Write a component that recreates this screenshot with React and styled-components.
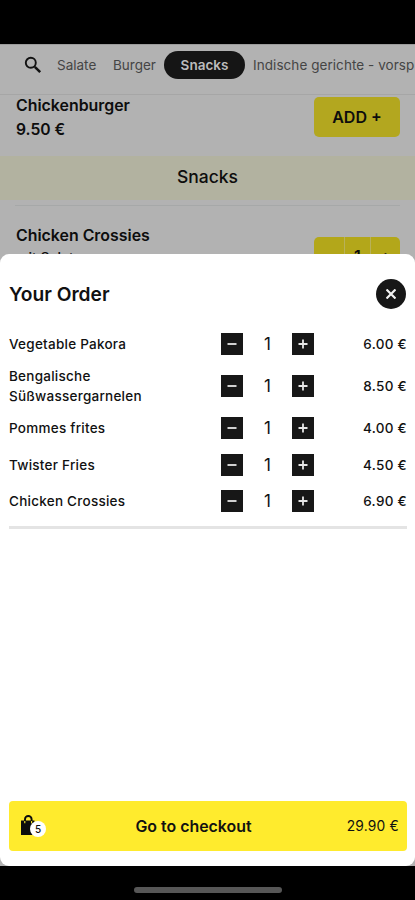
import styled, { createGlobalStyle } from "styled-components";

const GlobalStyle = createGlobalStyle`
  * {
    box-sizing: border-box;
  }
  body {
    margin: 0;
    background: #000;
    font-family: Inter, "Liberation Sans", sans-serif;
    color: #111;
  }
  button {
    font: inherit;
    color: inherit;
    border: 0;
    padding: 0;
  }
`;

const Phone = styled.div`
  position: relative;
  width: 415px;
  height: 900px;
  padding-top: 44px;
  background: #000;
  overflow: hidden;
`;

const Menu = styled.main`
  height: 822px;
  background: #b2b2b2;
  overflow: hidden;
  color: #0d0d0d;
`;

const Categories = styled.nav`
  display: flex;
  align-items: center;
  height: 51px;
  padding: 0 0 9px 24px;
  border-top: 1px solid #9b9b9b;
  border-bottom: 1px solid #a6a6a6;
  white-space: nowrap;
`;

const SearchIcon = styled.svg`
  flex: none;
  width: 18px;
  height: 18px;
  margin-right: 15px;
`;

const Category = styled.span`
  flex: none;
  width: ${({ $width }) => $width}px;
  font-size: 13.5px;
  letter-spacing: ${({ $spacing }) => $spacing || 0}px;
  color: #454545;
`;

const ActiveCategory = styled.span`
  flex: none;
  width: 81px;
  height: 28px;
  margin-right: 8px;
  border-radius: 14px;
  background: #151515;
  color: #bcbcbc;
  font-size: 13.5px;
  font-weight: 600;
  line-height: 28px;
  text-align: center;
`;

const Product = styled.article`
  display: flex;
  justify-content: space-between;
  height: ${({ $height }) => $height}px;
  padding: 0 15px 0 16px;
`;

const ProductInfo = styled.div`
  margin-top: ${({ $offset }) => $offset}px;
`;

const ProductName = styled.h3`
  margin: 0;
  font-size: 15.9px;
  font-weight: 600;
  line-height: 24px;
`;

const ProductPrice = styled.div`
  font-size: 15.7px;
  font-weight: 600;
  line-height: 24px;
`;

const ProductNote = styled.div`
  font-size: 14px;
  font-weight: 500;
  line-height: 19px;
`;

const AddButton = styled.button`
  width: 86px;
  height: 40px;
  margin-top: 2px;
  border-radius: 5px;
  background: #b3a71f;
  font-size: 16px;
  font-weight: 600;
`;

const SectionTitle = styled.h2`
  height: 44px;
  margin: 0;
  background: #b2b2a0;
  font-size: 17.5px;
  font-weight: 500;
  line-height: 42px;
  text-align: center;
`;

const Divider = styled.div`
  height: 1px;
  margin: 5px 15px 17px;
  background: #a6a8a8;
`;

const Stepper = styled.div`
  display: grid;
  grid-template-columns: 30px 26px 30px;
  height: 40px;
  margin-top: 14px;
  border-radius: 5px;
  overflow: hidden;
  background: #b3a71a;
  font-size: 16px;
  font-weight: 600;
  line-height: 38px;
  text-align: center;

  span + span {
    border-left: 1px solid #b8b15a;
  }
`;

const Sheet = styled.section`
  position: absolute;
  left: 0;
  top: 254px;
  display: flex;
  flex-direction: column;
  width: 415px;
  height: 612px;
  padding: 0 8px 15px 9px;
  border-radius: 9px;
  background: #fff;
`;

const SheetHeader = styled.header`
  display: flex;
  align-items: center;
  justify-content: space-between;
  height: 80px;
  margin-bottom: -8px;
`;

const SheetTitle = styled.h1`
  margin: 0;
  font-size: 19.2px;
  font-weight: 600;
`;

const CloseButton = styled.button`
  display: grid;
  place-items: center;
  width: 30px;
  height: 30px;
  margin-right: 1px;
  border-radius: 50%;
  background: #171717;
`;

const OrderList = styled.ul`
  margin: 0;
  padding: 0 0 7px;
  border-bottom: 3px solid #e4e4e4;
  list-style: none;
`;

const OrderRow = styled.li`
  display: grid;
  grid-template-columns: 212px 22px 49px 22px 1fr;
  align-items: center;
  height: ${({ $tall }) => ($tall ? 48 : 36.25)}px;
`;

const ItemName = styled.span`
  width: 150px;
  font-size: 13.5px;
  font-weight: 500;
  line-height: 20px;
  letter-spacing: 0.25px;
`;

const StepButton = styled.button`
  display: grid;
  place-items: center;
  width: 22px;
  height: 22px;
  background: #171717;
`;

const Quantity = styled.span`
  font-size: 17px;
  line-height: 22px;
  text-align: center;
`;

const ItemPrice = styled.span`
  font-size: 13.5px;
  font-weight: 500;
  letter-spacing: 0.3px;
  text-align: right;
`;

const CheckoutButton = styled.button`
  display: grid;
  grid-template-columns: 84px 1fr 116px;
  align-items: center;
  height: 50px;
  margin-top: auto;
  padding: 0 8px 0 11px;
  border-radius: 4px;
  background: #ffeb2d;
`;

const Bag = styled.span`
  position: relative;
  width: 28px;
  height: 22px;

  svg {
    display: block;
  }
`;

const BagCount = styled.span`
  position: absolute;
  left: 10px;
  top: 6px;
  width: 16px;
  height: 16px;
  border-radius: 50%;
  background: #fff;
  font-size: 10px;
  font-weight: 500;
  line-height: 16px;
  text-align: center;
`;

const CheckoutLabel = styled.span`
  font-size: 15.9px;
  font-weight: 600;
`;

const Total = styled.span`
  font-size: 13.8px;
  letter-spacing: 0.2px;
  text-align: right;
`;

const HomeIndicator = styled.div`
  width: 148px;
  height: 6px;
  margin: 21px auto 0 134px;
  border-radius: 3px;
  background: #575757;
`;

const items = [
  { name: "Vegetable Pakora", price: "6.00 €" },
  { name: "Bengalische Süßwassergarnelen", price: "8.50 €", tall: true },
  { name: "Pommes frites", price: "4.00 €" },
  { name: "Twister Fries", price: "4.50 €" },
  { name: "Chicken Crossies", price: "6.90 €" },
];

const Sign = ({ plus }) => (
  <svg width="10" height="10" viewBox="0 0 10 10" stroke="#e6e6e6" strokeWidth="1.8">
    <path d={plus ? "M.5 5h9M5 .5v9" : "M.5 5h9"} />
  </svg>
);

const App = () => {
  return (
    <Phone>
      <GlobalStyle />
      <Menu>
        <Categories>
          <SearchIcon viewBox="0 0 18 18" fill="none" stroke="#111">
            <circle cx="6.8" cy="6.8" r="5" strokeWidth="1.9" />
            <path d="M10.8 10.8l5.4 5.4" strokeWidth="2.5" />
          </SearchIcon>
          <Category $width={56}>Salate</Category>
          <Category $width={51}>Burger</Category>
          <ActiveCategory>Snacks</ActiveCategory>
          <Category $width={162} $spacing={0.06}>
            Indische gerichte - vorsp
          </Category>
        </Categories>
        <Product $height={61}>
          <ProductInfo $offset={-1}>
            <ProductName>Chickenburger</ProductName>
            <ProductPrice>9.50 €</ProductPrice>
          </ProductInfo>
          <AddButton>ADD +</AddButton>
        </Product>
        <SectionTitle>Snacks</SectionTitle>
        <Divider />
        <Product $height={60}>
          <ProductInfo $offset={1}>
            <ProductName>Chicken Crossies</ProductName>
            <ProductNote>mit Salat</ProductNote>
          </ProductInfo>
          <Stepper>
            <span>-</span>
            <span>1</span>
            <span>+</span>
          </Stepper>
        </Product>
      </Menu>

      <Sheet>
        <SheetHeader>
          <SheetTitle>Your Order</SheetTitle>
          <CloseButton aria-label="Close">
            <svg width="10" height="10" viewBox="0 0 10 10" stroke="#f2f2f2" strokeWidth="2.2">
              <path d="M.5.5l9 9M9.5.5l-9 9" />
            </svg>
          </CloseButton>
        </SheetHeader>
        <OrderList>
          {items.map(({ name, price, tall }) => (
            <OrderRow key={name} $tall={tall}>
              <ItemName>{name}</ItemName>
              <StepButton aria-label="Less">
                <Sign />
              </StepButton>
              <Quantity>1</Quantity>
              <StepButton aria-label="More">
                <Sign plus />
              </StepButton>
              <ItemPrice>{price}</ItemPrice>
            </OrderRow>
          ))}
        </OrderList>
        <CheckoutButton>
          <Bag>
            <svg width="17" height="22" viewBox="0 0 17 22">
              <path d="M1 5.5h13.5V20H1z" fill="#0c0c0c" />
              <path d="M5 6.5V4.3a3.3 3.3 0 0 1 6.6 0v2.2" fill="none" stroke="#0c0c0c" strokeWidth="1.9" />
              <path d="M4.8 6v2.2M11.6 6v2.2" stroke="#ffeb2d" strokeWidth="1.1" />
            </svg>
            <BagCount>5</BagCount>
          </Bag>
          <CheckoutLabel>Go to checkout</CheckoutLabel>
          <Total>29.90 €</Total>
        </CheckoutButton>
      </Sheet>
      <HomeIndicator />
    </Phone>
  );
};

export default App;
